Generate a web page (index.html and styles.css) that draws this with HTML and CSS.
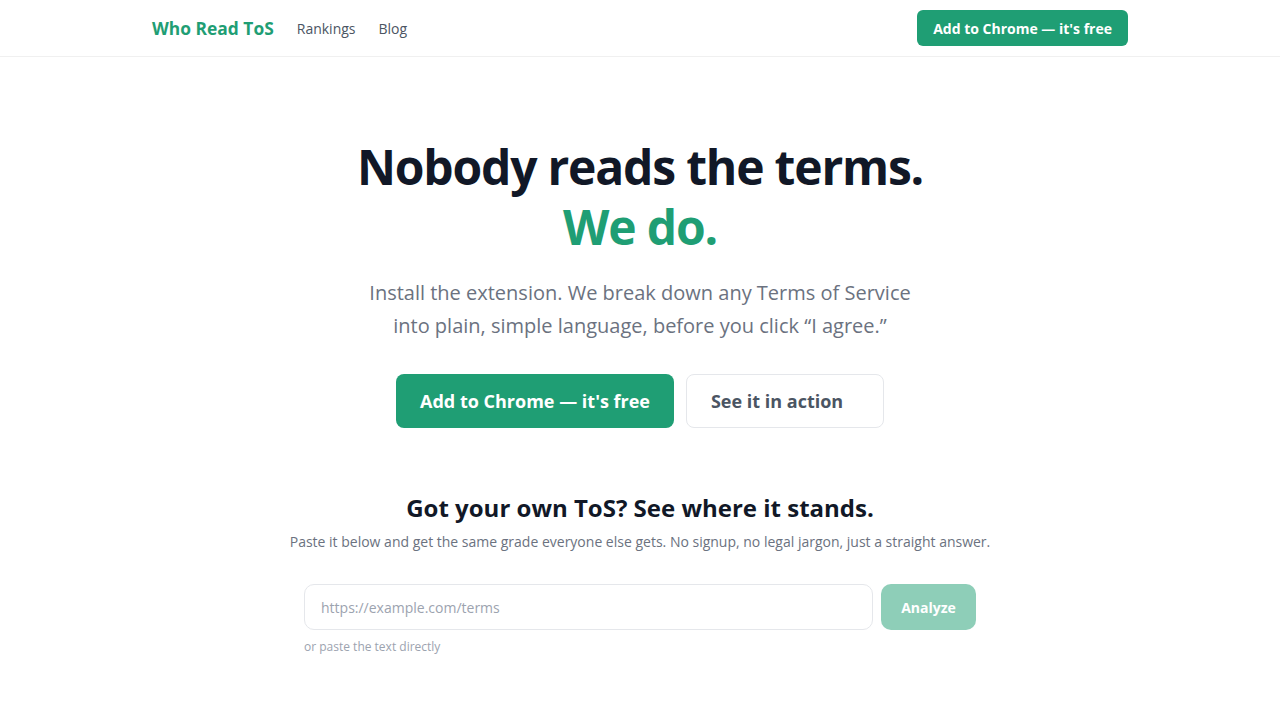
FILE: index.html
```html
<!DOCTYPE html>
<html lang="en">
<head>
    <meta charset="UTF-8">
    <meta name="viewport" content="width=device-width, initial-scale=1.0">
    <title>Who Read ToS</title>
    <link rel="stylesheet" href="styles.css">
</head>
<body>
    <header class="site-header">
        <nav class="nav">
            <div class="nav-left">
                <a href="#" class="logo">Who Read ToS</a>
                <a href="#" class="nav-link">Rankings</a>
                <a href="#" class="nav-link">Blog</a>
            </div>
            <a href="#" class="btn btn-small">Add to Chrome — it's free</a>
        </nav>
    </header>

    <main>
        <section class="hero">
            <h1 class="hero-title">Nobody reads the terms.<br><span class="accent">We do.</span></h1>
            <p class="hero-sub">Install the extension. We break down any Terms of Service into plain, simple language, before you click “I agree.”</p>
            <div class="hero-actions">
                <a href="#" class="btn btn-large">Add to Chrome — it's free</a>
                <a href="#" class="btn btn-large btn-outline">See it in action</a>
            </div>
        </section>

        <section class="check">
            <h2 class="check-title">Got your own ToS? See where it stands.</h2>
            <p class="check-sub">Paste it below and get the same grade everyone else gets. No signup, no legal jargon, just a straight answer.</p>
            <form class="check-form">
                <div class="check-row">
                    <input type="text" class="check-input" placeholder="https://example.com/terms">
                    <button type="button" class="check-button" disabled>Analyze</button>
                </div>
                <a href="#" class="check-hint">or paste the text directly</a>
            </form>
        </section>
    </main>
</body>
</html>
```

FILE: styles.css
```css
* {
    box-sizing: border-box;
}

body {
    margin: 0;
    font-family: "Open Sans", sans-serif;
    background: #fff;
    color: #111827;
}

a {
    text-decoration: none;
}

.site-header {
    border-bottom: 1px solid #f0f0f0;
}

.nav {
    max-width: 976px;
    margin: 0 auto;
    height: 56px;
    display: flex;
    align-items: center;
    justify-content: space-between;
}

.nav-left {
    display: flex;
    align-items: center;
    gap: 23px;
}

.logo {
    font-size: 17.4px;
    font-weight: 700;
    color: #1f9e74;
}

.nav-link {
    font-size: 14px;
    color: #4b5563;
}

.btn {
    display: inline-flex;
    align-items: center;
    justify-content: center;
    background: #1f9e74;
    color: #fff;
    font-weight: 700;
    border-radius: 6px;
}

.btn-small {
    height: 36px;
    padding: 0 16px;
    font-size: 14px;
}

.btn-large {
    height: 54px;
    padding: 0 24px;
    font-size: 18px;
    border-radius: 8px;
}

.btn-outline {
    background: #fff;
    color: #4b5563;
    border: 1px solid #e5e7eb;
    width: 198px;
    justify-content: flex-start;
}

.hero {
    text-align: center;
    padding-top: 80px;
}

.hero-title {
    margin: 0;
    font-size: 48px;
    line-height: 60px;
    font-weight: 700;
    letter-spacing: -1.2px;
    color: #111827;
}

.accent {
    color: #1f9e74;
}

.hero-sub {
    max-width: 560px;
    margin: 19px auto 0;
    font-size: 20px;
    line-height: 33px;
    color: #6b7280;
}

.hero-actions {
    display: flex;
    justify-content: center;
    gap: 12px;
    margin-top: 32px;
}

.check {
    text-align: center;
    margin-top: 64px;
}

.check-title {
    margin: 0;
    font-size: 24px;
    line-height: 32px;
    font-weight: 700;
    color: #111827;
}

.check-sub {
    margin: 7px 0 0;
    font-size: 14px;
    line-height: 22px;
    color: #6b7280;
}

.check-form {
    width: 672px;
    margin: 31px auto 0;
    text-align: left;
}

.check-row {
    display: flex;
    gap: 8px;
}

.check-input {
    flex: 1;
    height: 46px;
    padding: 0 16px;
    border: 1px solid #e5e7eb;
    border-radius: 10px;
    font-family: inherit;
    font-size: 14px;
    color: #111827;
}

.check-input::placeholder {
    color: #9ca3af;
}

.check-button {
    width: 95px;
    height: 46px;
    border: none;
    border-radius: 10px;
    background: #1f9e74;
    opacity: 0.5;
    color: #fff;
    font-family: inherit;
    font-size: 14px;
    font-weight: 700;
}

.check-hint {
    display: inline-block;
    margin-top: 8px;
    font-size: 12px;
    color: #9ca3af;
}
```
